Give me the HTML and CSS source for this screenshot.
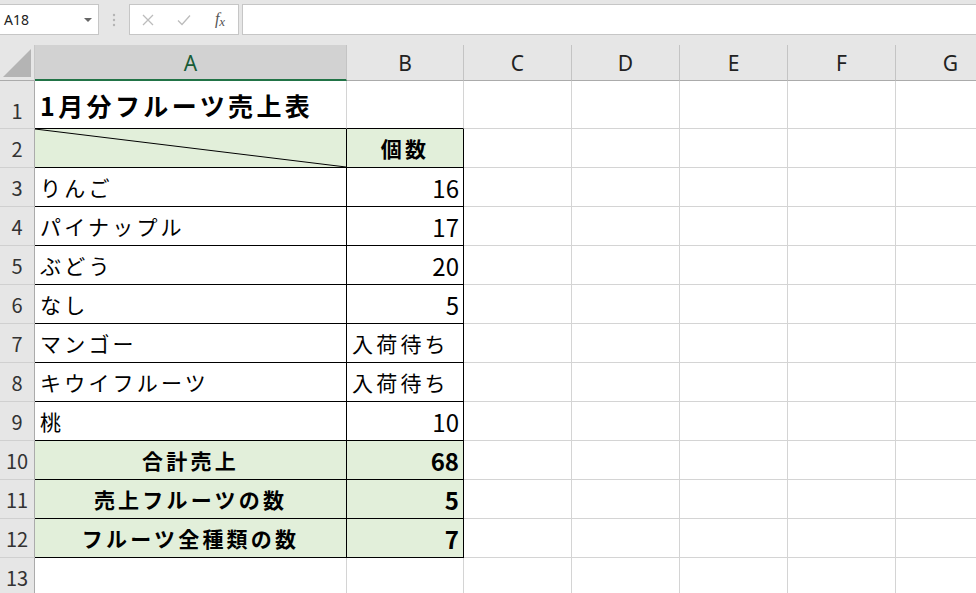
FILE: index.html
```html
<!DOCTYPE html>
<html lang="ja">
<head>
    <meta charset="UTF-8">
    <title>1月分フルーツ売上表</title>
    <link rel="stylesheet" href="styles.css">
</head>
<body>
    <div class="toolbar">
        <div class="namebox">
            <span>A18</span>
            <span class="drop"></span>
        </div>
        <div class="grip">
            <svg width="4" height="14" viewBox="0 0 4 14"><circle cx="2" cy="2" r="1.2"/><circle cx="2" cy="7" r="1.2"/><circle cx="2" cy="12" r="1.2"/></svg>
        </div>
        <div class="buttons">
            <span class="btn">
                <svg width="12" height="12" viewBox="0 0 12 12"><path d="M1 1L11 11M11 1L1 11"/></svg>
            </span>
            <span class="btn">
                <svg width="14" height="12" viewBox="0 0 14 12"><path d="M1 6.5L5 10.5L13 1.5"/></svg>
            </span>
            <span class="btn fx"><i>f</i><i class="sub">x</i></span>
        </div>
        <div class="formula"></div>
    </div>

    <div class="sheet">
        <div class="row head">
            <div class="corner">
                <svg width="34" height="35" viewBox="0 0 34 35"><polygon points="3,32 31,32 31,4"/></svg>
            </div>
            <div class="col sel">A</div>
            <div class="col">B</div>
            <div class="col">C</div>
            <div class="col">D</div>
            <div class="col">E</div>
            <div class="col">F</div>
            <div class="col">G</div>
        </div>

        <div class="row r1">
            <div class="num low">1</div>
            <div class="c bb title">1月分フルーツ売上表</div>
            <div class="c bb"></div>
            <div class="c"></div><div class="c"></div><div class="c"></div><div class="c"></div><div class="c"></div>
        </div>

        <div class="row">
            <div class="num">2</div>
            <div class="c t g diag">
                <svg viewBox="0 0 100 100" preserveAspectRatio="none"><line x1="0" y1="0" x2="100" y2="100"/></svg>
            </div>
            <div class="c t g m b">個数</div>
            <div class="c"></div><div class="c"></div><div class="c"></div><div class="c"></div><div class="c"></div>
        </div>

        <div class="row">
            <div class="num">3</div>
            <div class="c t">りんご</div>
            <div class="c t r">16</div>
            <div class="c"></div><div class="c"></div><div class="c"></div><div class="c"></div><div class="c"></div>
        </div>

        <div class="row">
            <div class="num">4</div>
            <div class="c t">パイナップル</div>
            <div class="c t r">17</div>
            <div class="c"></div><div class="c"></div><div class="c"></div><div class="c"></div><div class="c"></div>
        </div>

        <div class="row">
            <div class="num">5</div>
            <div class="c t">ぶどう</div>
            <div class="c t r">20</div>
            <div class="c"></div><div class="c"></div><div class="c"></div><div class="c"></div><div class="c"></div>
        </div>

        <div class="row">
            <div class="num">6</div>
            <div class="c t">なし</div>
            <div class="c t r">5</div>
            <div class="c"></div><div class="c"></div><div class="c"></div><div class="c"></div><div class="c"></div>
        </div>

        <div class="row">
            <div class="num">7</div>
            <div class="c t">マンゴー</div>
            <div class="c t">入荷待ち</div>
            <div class="c"></div><div class="c"></div><div class="c"></div><div class="c"></div><div class="c"></div>
        </div>

        <div class="row">
            <div class="num">8</div>
            <div class="c t">キウイフルーツ</div>
            <div class="c t">入荷待ち</div>
            <div class="c"></div><div class="c"></div><div class="c"></div><div class="c"></div><div class="c"></div>
        </div>

        <div class="row">
            <div class="num">9</div>
            <div class="c t">桃</div>
            <div class="c t r">10</div>
            <div class="c"></div><div class="c"></div><div class="c"></div><div class="c"></div><div class="c"></div>
        </div>

        <div class="row">
            <div class="num">10</div>
            <div class="c t g m b">合計売上</div>
            <div class="c t g r b">68</div>
            <div class="c"></div><div class="c"></div><div class="c"></div><div class="c"></div><div class="c"></div>
        </div>

        <div class="row">
            <div class="num">11</div>
            <div class="c t g m b">売上フルーツの数</div>
            <div class="c t g r b">5</div>
            <div class="c"></div><div class="c"></div><div class="c"></div><div class="c"></div><div class="c"></div>
        </div>

        <div class="row">
            <div class="num">12</div>
            <div class="c t g m b">フルーツ全種類の数</div>
            <div class="c t g r b">7</div>
            <div class="c"></div><div class="c"></div><div class="c"></div><div class="c"></div><div class="c"></div>
        </div>

        <div class="row">
            <div class="num">13</div>
            <div class="c"></div>
            <div class="c"></div>
            <div class="c"></div><div class="c"></div><div class="c"></div><div class="c"></div><div class="c"></div>
        </div>
    </div>
</body>
</html>
```

FILE: styles.css
```css
body {
    margin: 0;
    width: 976px;
    height: 593px;
    overflow: hidden;
    background: #fff;
    font-family: "Noto Sans CJK JP", "Noto Sans", sans-serif;
    color: #000;
}

/* barra de fórmulas */
.toolbar {
    height: 45px;
    box-sizing: border-box;
    padding-top: 4px;
    background: #e6e6e6;
    display: flex;
    align-items: flex-start;
}
.namebox {
    width: 99px;
    height: 31px;
    box-sizing: border-box;
    background: #fff;
    border: 1px solid #c6c6c6;
    border-left: none;
    display: flex;
    align-items: center;
    justify-content: space-between;
    padding: 0 6px 0 4px;
    font-family: "Noto Sans", sans-serif;
    font-size: 14px;
    color: #222;
}
.drop {
    width: 0;
    height: 0;
    border-top: 4px solid #666;
    border-left: 4px solid transparent;
    border-right: 4px solid transparent;
}
.grip {
    width: 30px;
    height: 31px;
    display: flex;
    align-items: center;
    justify-content: center;
}
.grip svg {
    fill: #b4b4b4;
}
.buttons {
    width: 110px;
    height: 31px;
    box-sizing: border-box;
    background: #fff;
    border: 1px solid #c6c6c6;
    display: flex;
    align-items: center;
}
.btn {
    width: 36px;
    display: flex;
    justify-content: center;
    align-items: center;
}
.btn svg {
    fill: none;
    stroke: #bcbcbc;
    stroke-width: 1.3;
}
.fx {
    font-family: "Liberation Serif", serif;
    font-size: 16px;
    color: #555;
    align-items: flex-start;
}
.fx .sub {
    font-size: 13px;
    margin-top: 4px;
}
.formula {
    flex: 1;
    margin-left: 3px;
    height: 31px;
    box-sizing: border-box;
    background: #fff;
    border: 1px solid #c6c6c6;
    border-right: none;
}

/* hoja */
.sheet {
    overflow: hidden;
}
.row {
    display: grid;
    grid-template-columns: 35px 312px 117px 108px 108px 108px 108px 110px;
    height: 39px;
}
.row.head {
    height: 36px;
}
.row.r1 {
    height: 48px;
}
.corner {
    background: #e6e6e6;
    border-right: 1px solid #c8c8c8;
    border-bottom: 1px solid #ababab;
    box-sizing: border-box;
}
.corner svg {
    display: block;
    fill: #b4b4b4;
}
.col {
    box-sizing: border-box;
    background: #e6e6e6;
    border-right: 1px solid #c4c4c4;
    border-bottom: 1px solid #ababab;
    display: flex;
    align-items: center;
    justify-content: center;
    font-family: "Noto Sans", sans-serif;
    font-size: 21px;
    color: #222;
    padding-top: 1px;
}
.col.sel {
    background: #d2d2d2;
    border-bottom: 2px solid #217346;
    color: #185c37;
}
.num {
    box-sizing: border-box;
    background: #e6e6e6;
    border-right: 1px solid #ababab;
    border-bottom: 1px solid #d0d0d0;
    display: flex;
    align-items: center;
    justify-content: center;
    font-size: 20px;
    color: #333;
}
.num.low {
    align-items: flex-end;
    padding-bottom: 3px;
}
.c {
    box-sizing: border-box;
    border-right: 1px solid #d4d4d4;
    border-bottom: 1px solid #d4d4d4;
    display: flex;
    align-items: center;
    padding: 0 5px;
    font-size: 21px;
    letter-spacing: 3.2px;
    white-space: nowrap;
    overflow: hidden;
}
.title {
    font-size: 25px;
    font-weight: bold;
    letter-spacing: 3.4px;
}
.bb {
    border-bottom-color: #000;
}
.t {
    border-right-color: #000;
    border-bottom-color: #000;
}
.g {
    background: #e2efda;
}
.r {
    justify-content: flex-end;
    padding-right: 4px;
    font-size: 24px;
    letter-spacing: 0;
}
.m {
    justify-content: center;
}
.b {
    font-weight: bold;
}
.diag {
    padding: 0;
}
.diag svg {
    width: 100%;
    height: 100%;
    display: block;
}
.diag line {
    stroke: #000;
    stroke-width: 1;
    vector-effect: non-scaling-stroke;
}
```
